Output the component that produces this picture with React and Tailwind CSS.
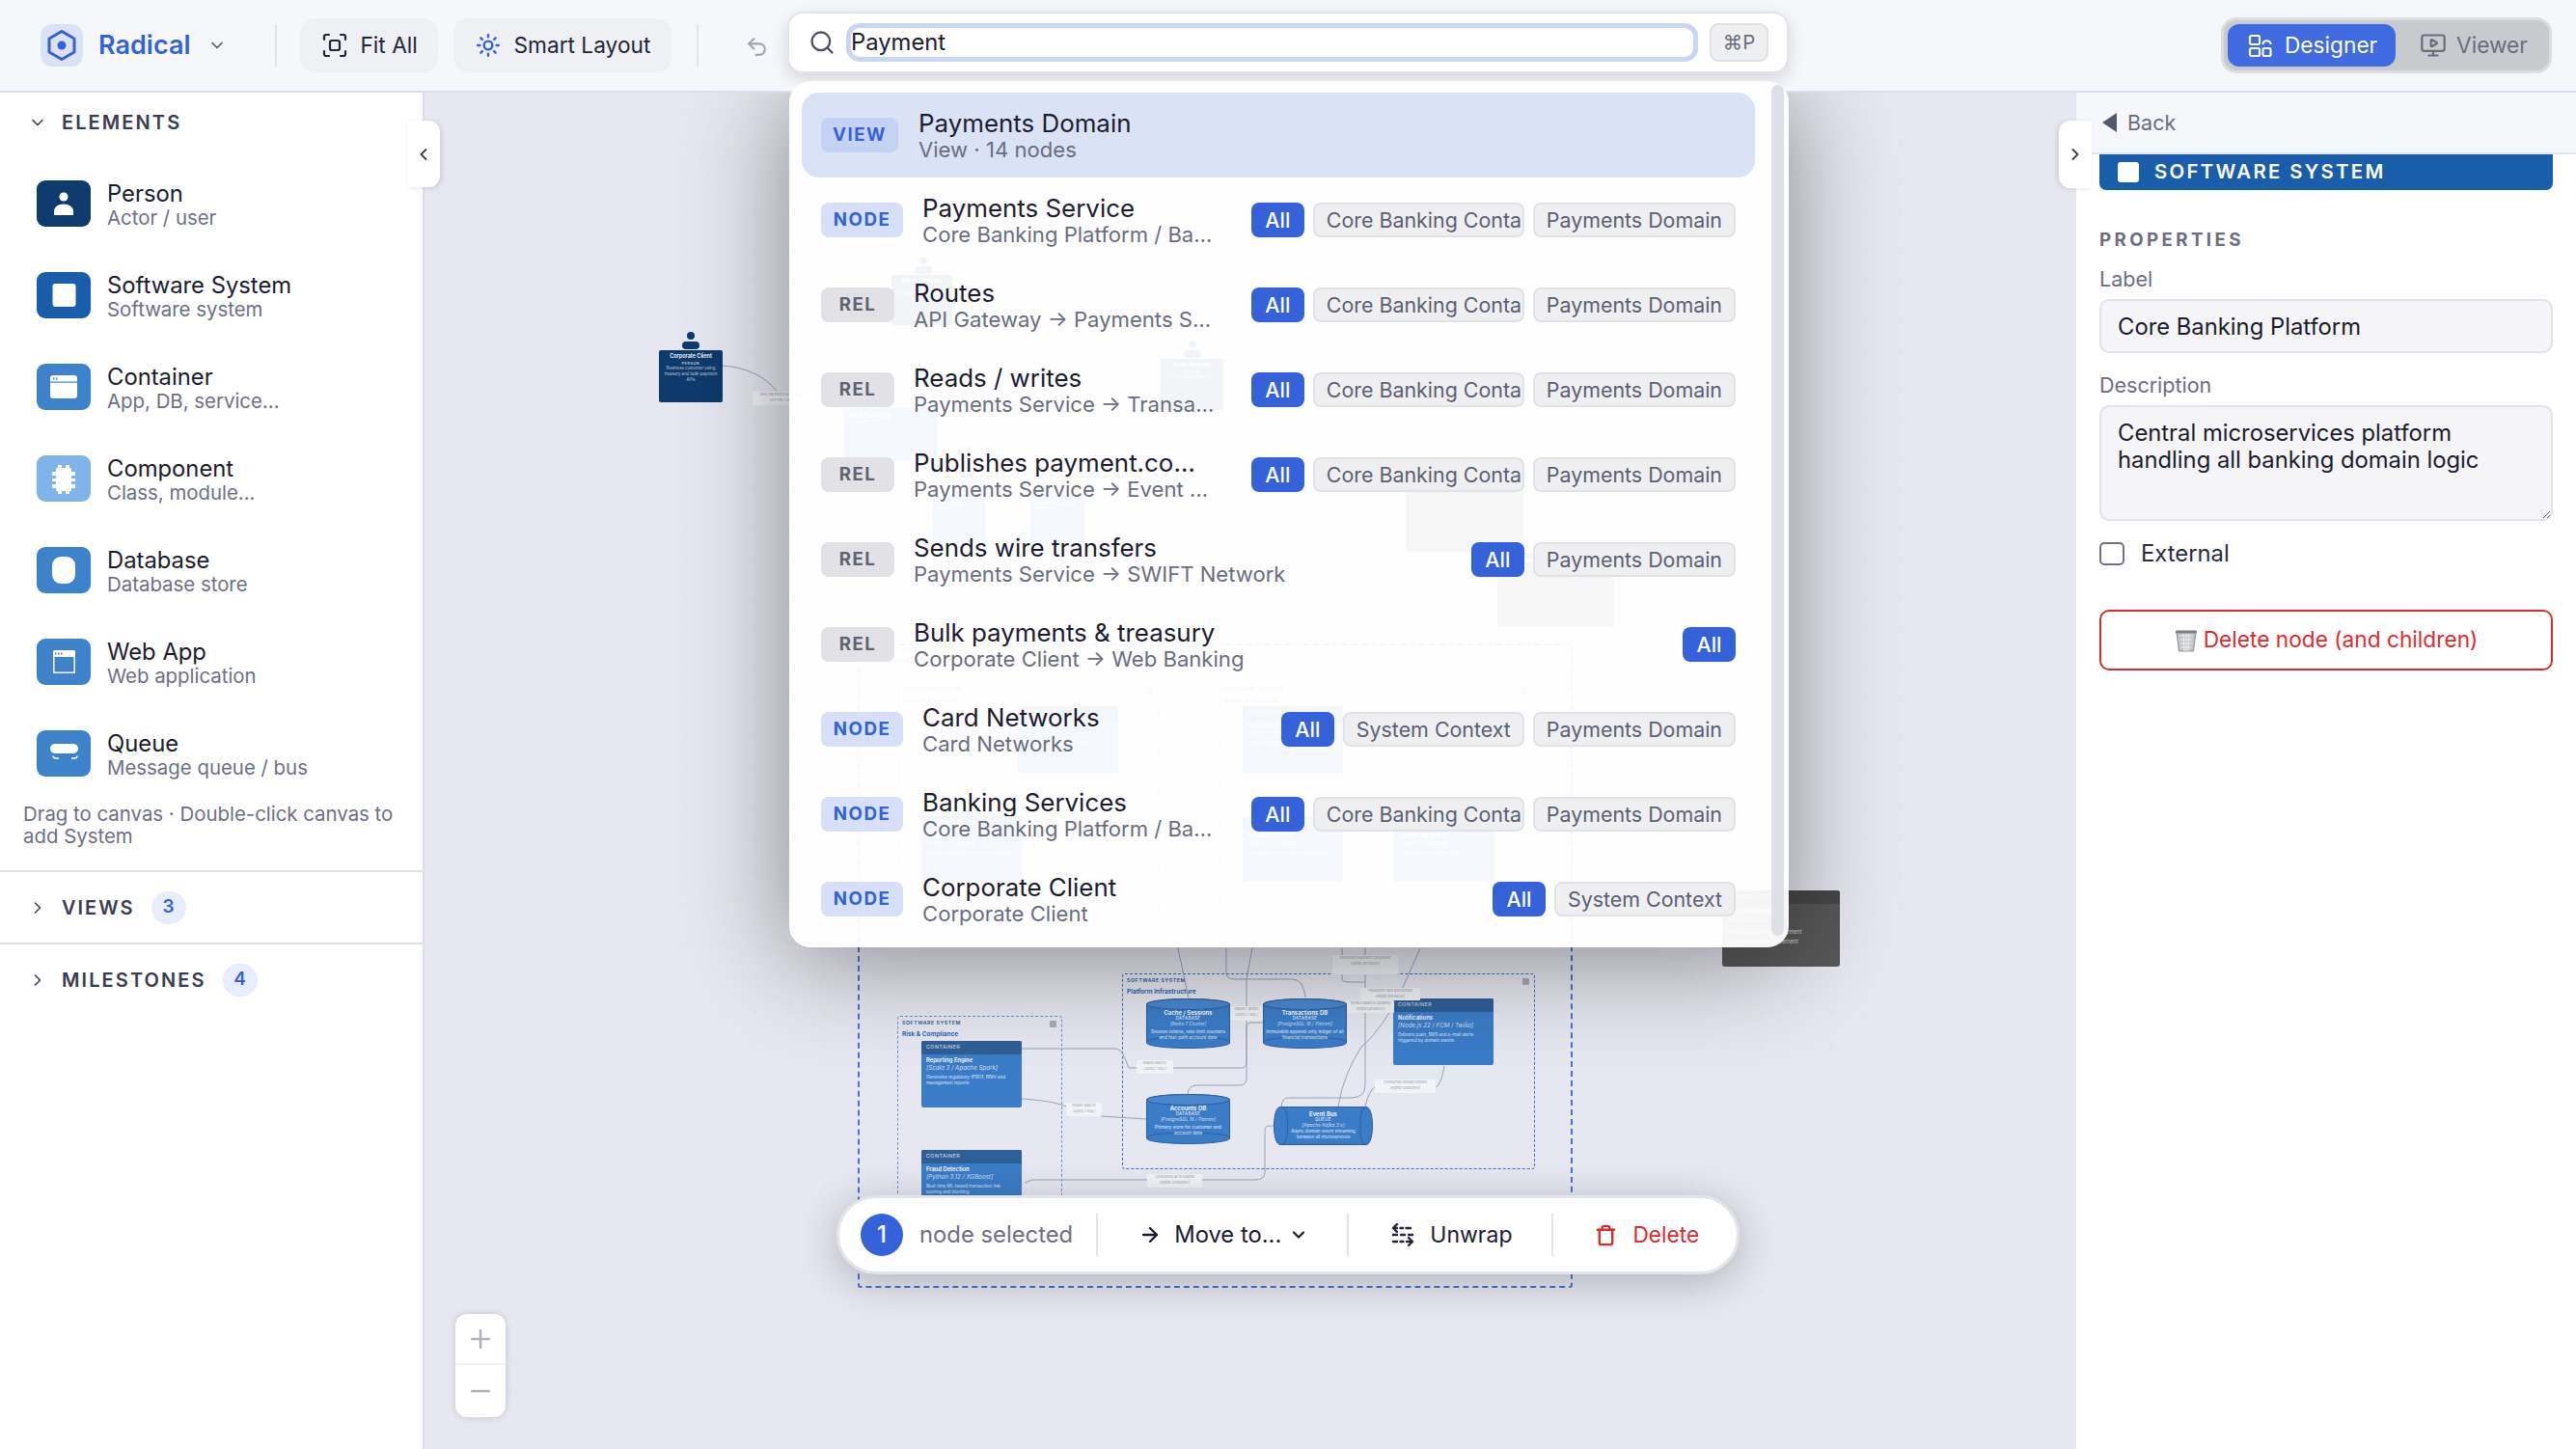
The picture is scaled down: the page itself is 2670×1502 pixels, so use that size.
import React from "react";
import { ChevronDown, ChevronRight, ChevronLeft, Sun, Undo2, Search, MonitorPlay, ArrowRight, Trash, Plus, Minus } from "lucide-react";

const palette = [
  { title: "Person", sub: "Actor / user", bg: "bg-[#0f3a6d]", icon: "person" },
  { title: "Software System", sub: "Software system", bg: "bg-[#1a5dab]", icon: "system" },
  { title: "Container", sub: "App, DB, service...", bg: "bg-[#3f82cc]", icon: "container" },
  { title: "Component", sub: "Class, module...", bg: "bg-[#7fb3ea]", icon: "component" },
  { title: "Database", sub: "Database store", bg: "bg-[#3f82cc]", icon: "database" },
  { title: "Web App", sub: "Web application", bg: "bg-[#3f82cc]", icon: "webapp" },
  { title: "Queue", sub: "Message queue / bus", bg: "bg-[#3f82cc]", icon: "queue" },
];

function PaletteGlyph({ kind, tint }) {
  return (
    <svg width="56" height="48" viewBox="0 0 56 48">
      {kind === "person" && (
        <g fill="#fff">
          <circle cx="28" cy="17" r="4.6" />
          <path d="M18 36v-4c0-4.5 4.5-7.5 10-7.5s10 3 10 7.5v4z" />
        </g>
      )}
      {kind === "system" && <rect x="16.500" y="12" width="24" height="24" rx="3" fill="#fff" />}
      {kind === "container" && (
        <g>
          <rect x="14" y="12" width="28" height="24" rx="3" fill="#fff" />
          <rect x="14" y="18.500" width="28" height="1.200" fill={tint} />
          <rect x="17" y="14.500" width="1.500" height="2" fill={tint} />
          <rect x="20" y="14.500" width="1.500" height="2" fill={tint} />
        </g>
      )}
      {kind === "component" && (
        <g fill="#fff">
          <rect x="20" y="13" width="16" height="24" rx="1.500" />
          <rect x="22" y="10" width="4" height="30" />
          <rect x="30" y="10" width="4" height="30" />
          <rect x="16" y="17" width="24" height="4" />
          <rect x="16" y="24" width="24" height="3" />
          <rect x="16" y="30" width="24" height="4" />
        </g>
      )}
      {kind === "database" && <rect x="16" y="10" width="24" height="28" rx="9" fill="#fff" />}
      {kind === "webapp" && (
        <g>
          <rect x="17" y="12" width="23" height="24" rx="1.500" fill="#fff" />
          <rect x="18.500" y="19" width="20" height="15.500" fill={tint} />
          <rect x="19" y="14.500" width="1.500" height="2" fill={tint} />
          <rect x="22" y="14.500" width="1.500" height="2" fill={tint} />
          <rect x="25" y="14.500" width="1.500" height="2" fill={tint} />
        </g>
      )}
      {kind === "queue" && (
        <g>
          <rect x="14" y="14" width="29" height="10" rx="5" fill="#fff" />
          <path d="M17 26.500c0 2 1 2.500 3 2.500h3M36 29h3c2 0 3-.5 3-2.500" stroke="#fff" strokeWidth="1.500" fill="none" />
        </g>
      )}
    </svg>
  );
}

function CountBadge({ n }) {
  return (
    <span className="flex h-[34px] w-[36px] items-center justify-center rounded-full bg-[#e7edfb] text-[19px] font-semibold text-[#3562d9]">
      {n}
    </span>
  );
}

function Sidebar() {
  const tints = ["", "", "#3f82cc", "", "", "#3f82cc", ""];
  return (
    <aside className="z-10 flex w-[440px] shrink-0 flex-col border-r-2 border-[#dcdfeb] bg-white">
      <div className="flex h-[62px] items-center pl-[29px]">
        <ChevronDown size={20} strokeWidth={1.800} className="text-[#3a3d50]" />
        <span className="ml-[15px] text-[20px] font-semibold tracking-[2.100px] text-[#3a3d50]">ELEMENTS</span>
      </div>
      <div className="flex flex-col gap-[47px] pl-[38px] pt-[29px]">
        {palette.map((p, i) => (
          <div key={p.title} className="flex h-[48px] items-center gap-[17px]">
            <div className={`h-[48px] w-[56px] shrink-0 overflow-hidden rounded-[9px] ${p.bg}`}>
              <PaletteGlyph kind={p.icon} tint={tints[i]} />
            </div>
            <div className="flex flex-col pt-[3px]">
              <span className="text-[23.8px] leading-[26px] text-[#1c1c2e]">{p.title}</span>
              <span className="text-[20.4px] leading-[24px] text-[#6e7082]">{p.sub}</span>
            </div>
          </div>
        ))}
      </div>
      <p className="mx-[24px] mt-[27px] text-[20.4px] leading-[23px] text-[#6e7082]">
        Drag to canvas · Double-click canvas to add System
      </p>
      <div className="mt-[24px] flex h-[75px] items-center border-t-2 border-[#dfe1ea] pl-[29px]">
        <ChevronRight size={20} strokeWidth={1.800} className="text-[#3a3d50]" />
        <span className="ml-[15px] text-[20px] font-semibold tracking-[2px] text-[#3a3d50]">VIEWS</span>
        <span className="ml-[17px]"><CountBadge n={3} /></span>
      </div>
      <div className="flex h-[75px] items-center border-t-2 border-[#dfe1ea] pl-[29px]">
        <ChevronRight size={20} strokeWidth={1.800} className="text-[#3a3d50]" />
        <span className="ml-[15px] text-[20px] font-semibold tracking-[2.100px] text-[#3a3d50]">MILESTONES</span>
        <span className="ml-[17px]"><CountBadge n={4} /></span>
      </div>
    </aside>
  );
}

function FitIcon() {
  return (
    <svg width="26" height="26" viewBox="0 0 26 26" fill="none" stroke="#23263a" strokeWidth="2.200" strokeLinecap="round" strokeLinejoin="round">
      <path d="M2 7V4a2 2 0 0 1 2-2h3M19 2h3a2 2 0 0 1 2 2v3M24 19v3a2 2 0 0 1-2 2h-3M7 24H4a2 2 0 0 1-2-2v-3" />
      <rect x="8" y="8" width="10" height="10" rx="2" />
    </svg>
  );
}

function Topbar() {
  return (
    <header className="z-20 flex h-[96px] shrink-0 items-center border-b-2 border-[#dcdfeb] bg-[#f5f7fb] pl-[42px] pr-[25px]">
      <div className="flex h-[44px] w-[44px] items-center justify-center rounded-[12px] bg-[#dae2f6]">
        <svg width="32" height="34" viewBox="0 0 32 34" fill="none">
          <path d="M16 2.500 29 10v14l-13 7.500L3 24V10z" stroke="#3562d9" strokeWidth="3" strokeLinejoin="round" />
          <circle cx="16" cy="17" r="4.500" fill="#3562d9" />
        </svg>
      </div>
      <span className="ml-[16px] text-[27px] font-semibold text-[#3562d9]">Radical</span>
      <ChevronDown size={20} className="ml-[18px] text-[#555869]" />
      <div className="ml-[50px] h-[44px] w-[2px] bg-[#e2e4ec]" />
      <button className="ml-[24px] flex h-[56px] w-[143px] items-center gap-[13px] rounded-[15px] bg-[#eff0f4] pl-[23px] text-[22.7px] text-[#23263a]">
        <FitIcon />
        Fit All
      </button>
      <button className="ml-[16px] flex h-[56px] w-[226px] items-center gap-[13px] rounded-[15px] bg-[#eff0f4] pl-[23px] text-[22.7px] text-[#23263a]">
        <Sun size={26} strokeWidth={2.200} className="text-[#3562d9]" />
        Smart Layout
      </button>
      <div className="ml-[26px] h-[44px] w-[2px] bg-[#e2e4ec]" />
      <Undo2 size={25} strokeWidth={2} className="ml-[48px] mt-[2px] text-[#a2a4b0]" />
      <div className="ml-auto flex h-[58px] w-[343px] items-center rounded-[16px] border-[3px] border-[#dcdde3] bg-[#c9cace] pl-[4px]">
        <div className="flex h-[44px] w-[174px] items-center gap-[13px] rounded-[12px] bg-[#3f6ae0] pl-[21px] text-[22.700px] text-white">
          <svg width="25" height="25" viewBox="0 0 25 25" fill="none" stroke="#fff" strokeWidth="2.200" strokeLinejoin="round">
            <rect x="2" y="2" width="10" height="9" rx="1.500" />
            <rect x="2" y="15" width="10" height="8" rx="1.500" />
            <rect x="15.500" y="15" width="8" height="8" rx="1.500" />
            <path d="M15.500 11c0-5 8-5 8 0" />
          </svg>
          Designer
        </div>
        <div className="ml-[25px] flex items-center gap-[10px] text-[22.700px] text-[#6a6d7e]">
          <MonitorPlay size={28} strokeWidth={1.900} />
          Viewer
        </div>
      </div>
    </header>
  );
}

function RightPanel() {
  return (
    <aside className="z-10 flex w-[518px] shrink-0 flex-col bg-white">
      <div className="flex h-[64px] shrink-0 items-center gap-[11px] border-b-2 border-[#e4e6ee] bg-[#f5f7fb] pl-[27px] text-[21.500px] text-[#6a6d7e]">
        <svg width="15" height="20" viewBox="0 0 15 20"><path d="M15 0v20L0 10z" fill="#55586a" /></svg>
        Back
      </div>
      <div className="px-[24px]">
        <div className="flex h-[37px] items-center gap-[16px] rounded-b-[7px] bg-[#1a5dab] pl-[19px] text-[20.4px] font-semibold tracking-[2.300px] text-white">
          <span className="h-[21px] w-[22px] rounded-[3px] bg-white" />
          SOFTWARE SYSTEM
        </div>
        <div className="mt-[41px] text-[18.7px] font-bold leading-[22px] tracking-[3.400px] text-[#6b6e80]">PROPERTIES</div>
        <div className="mt-[16px] text-[21.500px] leading-[26px] text-[#6b6e80]">Label</div>
        <input
          readOnly
          value="Core Banking Platform"
          className="mt-[8px] block h-[56px] w-full rounded-[10px] border-2 border-[#e2e3ea] bg-[#f5f5f7] px-[17px] text-[23.8px] text-[#1c1c2e]"
        />
        <div className="mt-[20px] text-[21.500px] leading-[26px] text-[#6b6e80]">Description</div>
        <textarea
          readOnly
          value={"Central microservices platform handling all banking domain logic"}
          className="mt-[8px] block h-[120px] w-full resize-y rounded-[10px] border-2 border-[#e2e3ea] bg-[#f5f5f7] px-[17px] py-[13px] text-[23.8px] leading-[28px] text-[#1c1c2e] outline-none"
        />
        <label className="mt-[22px] flex h-[24px] items-center gap-[17px] text-[23.8px] text-[#2a2c3e]">
          <span className="h-[24px] w-[26px] rounded-[5px] border-2 border-[#6f7280] bg-white" />
          External
        </label>
        <button className="mt-[46px] flex h-[63px] w-full items-center justify-center gap-[6px] rounded-[10px] border-[2.500px] border-[#d92d2d] bg-white text-[22.700px] text-[#d92d2d]">
          <svg width="24" height="24" viewBox="0 0 24 24">
            <path d="M2 3h20l-2.500 20h-15z" fill="#c2c4c6" stroke="#8c8f93" strokeWidth="1" />
            <path d="M5 7h14M5.500 11h13M6 15h12M6.500 19h11M9 4l1 19M15 4l-1 19M12 4v19" stroke="#f2f2f2" strokeWidth="0.900" />
            <rect x="1" y="1.500" width="22" height="3" rx="1" fill="#7d8186" />
          </svg>
          Delete node (and children)
        </button>
      </div>
    </aside>
  );
}

const containers = [
  { x: 955, y: 1079, w: 104, h: 69, title: "Reporting Engine", tech: "[Scala 3 / Apache Spark]", desc: "Generates regulatory (PSD2, BBA) and management reports" },
  { x: 955, y: 1192, w: 104, h: 69, title: "Fraud Detection", tech: "[Python 3.12 / XGBoost]", desc: "Real-time ML-based transaction risk scoring and blocking" },
  { x: 1444, y: 1035, w: 104, h: 69, title: "Notifications", tech: "[Node.js 22 / FCM / Twilio]", desc: "Delivers push, SMS and e-mail alerts triggered by domain events" },
  { x: 1055, y: 732, w: 104, h: 69, title: "Auth Service", tech: "[Go / OAuth2]", desc: "Issues and verifies access tokens" },
  { x: 1288, y: 732, w: 104, h: 69, title: "Payments Service", tech: "[Java 21 / Spring]", desc: "Handles transfers and settlement" },
  { x: 955, y: 846, w: 104, h: 68, title: "Accounts Service", tech: "[Java 21 / Spring]", desc: "Manages customer accounts and balances" },
  { x: 1288, y: 846, w: 104, h: 68, title: "Account Service", tech: "[Java 21 / Spring]", desc: "Customer account lifecycle management" },
  { x: 1445, y: 846, w: 104, h: 68, title: "Card Management", tech: "[Java 21 / Spring]", desc: "Card issuing and authorisation" },
];

const dbs = [
  { x: 1188, y: 1035, title: "Cache / Sessions", tech: "[Redis 7 Cluster]", desc: "Session tokens, rate-limit counters and fast-path account data" },
  { x: 1309, y: 1035, title: "Transactions DB", tech: "[PostgreSQL 16 / Patroni]", desc: "Immutable append-only ledger of all financial transactions" },
  { x: 1188, y: 1134, title: "Accounts DB", tech: "[PostgreSQL 16 / Patroni]", desc: "Primary store for customer and account data" },
];

const boundaries = [
  { x: 1163, y: 1009, w: 428, h: 203, kind: "SOFTWARE SYSTEM", name: "Platform Infrastructure", tone: "border-[#3f6fc4]" },
  { x: 930, y: 1053, w: 171, h: 240, kind: "SOFTWARE SYSTEM", name: "Risk & Compliance", tone: "border-[#6f93cf]" },
  { x: 931, y: 707, w: 270, h: 245, kind: "SOFTWARE SYSTEM", name: "Access & Security", tone: "border-[#6f93cf]" },
  { x: 1264, y: 707, w: 326, h: 230, kind: "SOFTWARE SYSTEM", name: "Banking Services", tone: "border-[#6f93cf]" },
];

const people = [
  { x: 683, y: 363, w: 66, h: 54, title: "Corporate Client", desc: "Business customer using treasury and bulk-payment APIs", hy: 348 },
  { x: 924, y: 285, w: 63, h: 52, title: "Retail Customer", desc: "Individual bank customer", hy: 270 },
  { x: 1203, y: 372, w: 65, h: 53, title: "Bank Operator", desc: "Back-office operator", hy: 357 },
];

const plainBoxes = [
  { x: 875, y: 423, w: 96, h: 54, title: "Web Banking", sub: "WEB APP", bg: "bg-[#3f82cc]" },
  { x: 967, y: 513, w: 55, h: 50, title: "iOS App", sub: "MOBILE", bg: "bg-[#3f82cc]" },
  { x: 1068, y: 513, w: 56, h: 50, title: "Android App", sub: "MOBILE", bg: "bg-[#3f82cc]" },
  { x: 1457, y: 490, w: 122, h: 82, title: "SWIFT Network", sub: "EXTERNAL SYSTEM", bg: "bg-[#5a5a5e]" },
  { x: 1552, y: 573, w: 121, h: 77, title: "API Gateway", sub: "CONTAINER", bg: "bg-[#5a5a5e]" },
];

const labels = [
  { x: 1381, y: 990, w: 68, h: 20, a: "Publishes payment.completed", b: "[Kafka producer]" },
  { x: 1410, y: 1024, w: 62, h: 13, a: "Publishes card.authorised", b: "[Kafka producer]" },
  { x: 1275, y: 1043, w: 34, h: 15, a: "Reads / writes", b: "[JDBC / SQL]" },
  { x: 1396, y: 1037, w: 49, h: 13, a: "Writes balance.updated", b: "[Kafka producer]" },
  { x: 1178, y: 1099, w: 38, h: 14, a: "Reads (batch)", b: "[JDBC / SQL]" },
  { x: 1105, y: 1143, w: 37, h: 14, a: "Reads (batch)", b: "[JDBC / SQL]" },
  { x: 1425, y: 1119, w: 63, h: 14, a: "Consumes domain events", b: "[Kafka consumer]" },
  { x: 1189, y: 1217, w: 57, h: 14, a: "Consumes all tx events", b: "[Kafka consumer]" },
  { x: 780, y: 406, w: 60, h: 14, a: "Bulk payments & treasury", b: "[HTTPS / API]" },
];

const edges = [
  "M749 379C775 381 792 390 805 405",
  "M1059 1087L1155 1087Q1162 1087 1165 1095L1170 1107H1287Q1292 1107 1292 1100V1065Q1292 1060 1297 1060H1309",
  "M1059 1139C1085 1141 1095 1143 1105 1147L1142 1157L1188 1160",
  "M1221 983L1232 1035",
  "M1271 983V1008Q1271 1015 1280 1015H1340Q1351 1015 1353 1034",
  "M1298 983L1292 1015V1118Q1292 1125 1284 1125H1240Q1232 1125 1231 1134",
  "M1415 983V1125Q1415 1138 1400 1138H1335Q1329 1138 1328 1147",
  "M1391 983V1015Q1391 1018 1400 1018H1415",
  "M1472 983L1448 1037Q1425 1075 1411 1085Q1392 1115 1387 1147",
  "M1415 1147Q1419 1130 1425 1127H1488Q1494 1125 1497 1105",
  "M1320 1167H1316Q1311 1167 1311 1172V1215Q1311 1223 1301 1223H1070L1062 1226",
];

function Diagram() {
  return (
    <div className="absolute left-[-440px] top-[-96px] h-[1502px] w-[2670px] leading-none">
      <div className="absolute left-[889px] top-[667px] h-[668px] w-[741px] rounded-[3px] border-2 border-dashed border-[#4a72d2]">
        <div className="pl-[5px] pt-[3px] text-[5.500px] tracking-[0.400px] text-[#1a5dab]">SOFTWARE SYSTEM</div>
        <div className="pl-[5px] pt-[3px] text-[7px] font-semibold text-[#1a5dab]">Core Banking Platform</div>
      </div>
      {boundaries.map((b) => (
        <div
          key={b.name}
          className={`absolute rounded-[3px] border border-dashed ${b.tone}`}
          style={{ left: b.x, top: b.y, width: b.w, height: b.h }}
        >
          <div className="pl-[4px] pt-[4px] text-[5.300px] font-semibold tracking-[0.500px] text-[#1f5a9f]">{b.kind}</div>
          <div className="pl-[4px] pt-[6px] text-[6.500px] font-semibold text-[#1a5dab]">{b.name}</div>
          <span className="absolute right-[5px] top-[4px] h-[7px] w-[7px] rounded-[1px] bg-[#a9acb8]" />
        </div>
      ))}
      <svg className="absolute left-0 top-0" width="2670" height="1502" fill="none" stroke="#98a2b8" strokeWidth="1">
        {edges.map((d) => <path key={d} d={d} />)}
      </svg>
      {containers.map((c) => (
        <div
          key={c.title}
          className="absolute overflow-hidden rounded-[2px] bg-[#3b7cc8] text-white"
          style={{ left: c.x, top: c.y, width: c.w, height: c.h }}
        >
          <div className="flex h-[14px] items-center bg-[#2f5f97] pl-[5px] text-[5.300px] tracking-[0.500px] text-white/80">CONTAINER</div>
          <div className="pl-[5px] pt-[3px] text-[5.800px] font-semibold">{c.title}</div>
          <div className="pl-[5px] pt-[2px] text-[6.200px] italic text-white/75">{c.tech}</div>
          <div className="px-[5px] pt-[4px] text-[4.500px] leading-[6px] text-white/80">{c.desc}</div>
        </div>
      ))}
      {dbs.map((d) => (
        <div key={d.title} className="absolute h-[52px] w-[87px] text-center text-white" style={{ left: d.x, top: d.y }}>
          <svg className="absolute left-0 top-0" width="87" height="52" viewBox="0 0 87 52">
            <path d="M.5 6C.5 3 20 .5 43.500 .5S86.500 3 86.500 6V46C86.500 49 67 51.500 43.500 51.500S.5 49 .5 46z" fill="#3b7cc8" stroke="#2f5f97" />
            <ellipse cx="43.500" cy="6" rx="43" ry="5.500" fill="#4a87cf" stroke="#2f5f97" />
            <path d="M.5 46C.5 41 20 40.500 43.500 40.500S86.500 41 86.500 46" fill="none" stroke="#2f5f97" />
          </svg>
          <div className="relative pt-[12px] text-[6px] font-semibold">{d.title}</div>
          <div className="relative pt-[1px] text-[4.400px] tracking-[0.400px]">DATABASE</div>
          <div className="relative pt-[1px] text-[4.800px] italic text-white/75">{d.tech}</div>
          <div className="relative px-[2px] pt-[2px] text-[4.700px] leading-[6px] text-white/85">{d.desc}</div>
        </div>
      ))}
      <div className="absolute left-[1320px] top-[1147px] h-[40px] w-[103px] text-center text-white">
        <svg className="absolute left-0 top-0" width="103" height="40" viewBox="0 0 103 40">
          <path d="M7 .5H96C100 .5 102.500 9 102.500 20S100 39.500 96 39.500H7C3 39.500 .5 31 .5 20S3 .5 7 .5z" fill="#3b7cc8" stroke="#2f5f97" />
          <path d="M8 .5C13 .5 14.500 9 14.500 20S13 39.500 8 39.500" fill="none" stroke="#2f5f97" />
          <path d="M96 .5C91 .5 90 9 90 20S91 39.500 96 39.500" fill="none" stroke="#2f5f97" />
        </svg>
        <div className="relative pt-[5px] text-[6px] font-semibold">Event Bus</div>
        <div className="relative pt-[1px] text-[4.400px] tracking-[0.400px]">QUEUE</div>
        <div className="relative pt-[1px] text-[4.800px] italic text-white/75">[Apache Kafka 3.x]</div>
        <div className="relative px-[15px] pt-[1px] text-[4.500px] leading-[6px] text-white/85">Async domain-event streaming between all microservices</div>
      </div>
      {people.map((p) => (
        <div key={p.title} className="absolute" style={{ left: p.x, top: p.hy - 4 }}>
          <span className="absolute left-[29px] top-0 h-[8px] w-[8px] rounded-full bg-[#0f3a6d]" />
          <span className="absolute left-[24px] top-[10px] h-[8px] w-[18px] rounded-full bg-[#0f3a6d]" />
          <div
            className="absolute top-[19px] overflow-hidden rounded-[2px] bg-[#0f3a6d] px-[3px] pt-[4px] text-center text-white"
            style={{ width: p.w, height: p.h }}
          >
            <div className="whitespace-nowrap text-[5.500px] font-semibold">{p.title}</div>
            <div className="pt-[2px] text-[3.800px] tracking-[0.500px]">PERSON</div>
            <div className="pt-[1px] text-[4.300px] leading-[6px] text-white/75">{p.desc}</div>
          </div>
        </div>
      ))}
      {plainBoxes.map((b) => (
        <div
          key={b.title}
          className={`absolute overflow-hidden rounded-[2px] pl-[4px] pt-[4px] text-white ${b.bg}`}
          style={{ left: b.x, top: b.y, width: b.w, height: b.h }}
        >
          <div className="text-[7px] font-semibold">{b.title}</div>
          <div className="pt-[2px] text-[4.500px]">{b.sub}</div>
        </div>
      ))}
      <div className="absolute left-[1785px] top-[923px] h-[79px] w-[122px] overflow-hidden rounded-[3px] bg-[#585858] text-white">
        <div className="flex h-[14px] items-center bg-[#474747] pl-[5px] text-[5.300px] tracking-[0.500px] text-white/70">EXTERNAL SYSTEM</div>
        <div className="pl-[5px] pt-[4px] text-[7.500px] font-semibold text-white/80">Card Networks</div>
        <div className="pl-[5px] pt-[3px] text-[5px] italic text-white/60">Visa / Mastercard</div>
        <div className="px-[5px] pt-[4px] text-[5.500px] leading-[10px] text-white/75">Visa and Mastercard payment authorisation and settlement</div>
      </div>
      {labels.map((l) => (
        <div
          key={l.a + l.x}
          className="absolute overflow-hidden rounded-[1px] bg-[#f2f3f7] text-center text-[3.700px] leading-[6px] whitespace-nowrap text-[#9a9dab]"
          style={{ left: l.x, top: l.y, width: l.w, height: l.h }}
        >
          <div>{l.a}</div>
          <div className="italic">{l.b}</div>
        </div>
      ))}
      <div className="absolute left-[818px] top-[84px] h-[898px] w-[1036px] rounded-[22px] shadow-[0_12px_110px_rgba(0,0,0,0.42)]" />
    </div>
  );
}

const NODE = "NODE";
const REL = "REL";
const results = [
  { t: "Payments Service", s: "Core Banking Platform / Banking Services", k: NODE, p: ["Core Banking Container", "Payments Domain"] },
  { t: "Routes", s: "API Gateway → Payments Service", k: REL, p: ["Core Banking Container", "Payments Domain"] },
  { t: "Reads / writes", s: "Payments Service → Transactions DB", k: REL, p: ["Core Banking Container", "Payments Domain"] },
  { t: "Publishes payment.completed", s: "Payments Service → Event Bus", k: REL, p: ["Core Banking Container", "Payments Domain"] },
  { t: "Sends wire transfers", s: "Payments Service → SWIFT Network", k: REL, p: ["Payments Domain"] },
  { t: "Bulk payments & treasury", s: "Corporate Client → Web Banking", k: REL, p: [] },
  { t: "Card Networks", s: "Card Networks", k: NODE, p: ["System Context", "Payments Domain"] },
  { t: "Banking Services", s: "Core Banking Platform / Banking Services", k: NODE, p: ["Core Banking Container", "Payments Domain"] },
  { t: "Corporate Client", s: "Corporate Client", k: NODE, p: ["System Context"] },
];

function Pill({ label }) {
  return (
    <span className="flex h-[36px] max-w-[219px] shrink-0 items-center overflow-hidden whitespace-nowrap rounded-[8px] border-2 border-[#dfe2e9] bg-[#efeff1] px-[12px] text-[21.4px] text-[#5b5f73]">
      {label}
    </span>
  );
}

function ResultRow({ r }) {
  const node = r.k === NODE;
  return (
    <div className="flex h-[88px] items-center px-[20px]">
      <span
        className={`flex h-[36px] shrink-0 items-center justify-center rounded-[8px] text-[18.7px] font-bold tracking-[1.500px] ${
          node ? "w-[85px] bg-[#d7e0f8] text-[#3562d9]" : "w-[76px] bg-[#e2e2e6] text-[#5f6270]"
        }`}
      >
        {r.k}
      </span>
      <div className="ml-[20px] flex min-w-0 flex-1 flex-col">
        <span className="truncate text-[25.9px] leading-[29px] text-[#1c1c2e]">{r.t}</span>
        <span className="truncate text-[22.1px] leading-[26px] text-[#6a6d7e]">{r.s}</span>
      </div>
      <div className="ml-[36px] flex shrink-0 items-center gap-[9px]">
        <span className="flex h-[36px] w-[55px] items-center justify-center rounded-[8px] bg-[#3562d9] text-[21.4px] font-medium text-white">All</span>
        {r.p.map((x) => <Pill key={x} label={x} />)}
      </div>
    </div>
  );
}

function CommandPalette() {
  return (
    <>
      <div className="absolute left-[816px] top-[12px] z-30 flex h-[64px] w-[1038px] items-center rounded-[16px] border-2 border-[#e3e4ea] bg-white pl-[20px] shadow-[0_6px_18px_rgba(0,0,0,0.14)]">
        <Search size={28} strokeWidth={2} className="text-[#4e5162]" />
        <div className="ml-[11px] flex h-[40px] w-[883px] items-center rounded-[14px] border-[5px] border-[#cad6f3] bg-white text-[23.8px] text-[#1c1c2e]">
          Payment
        </div>
        <div className="ml-[12px] flex h-[40px] w-[61px] items-center justify-center rounded-[9px] border-2 border-[#dfe0e4] bg-[#eeeff1] text-[20.4px] text-[#6a6d7e]">
          ⌘P
        </div>
      </div>
      <div className="absolute left-[818px] top-[84px] z-30 h-[898px] w-[1036px] rounded-[22px] bg-white/95 pl-[13px] pr-[35px] pt-[12px]">
        <div className="flex h-[88px] items-center rounded-[18px] bg-[#dae2f6] px-[20px]">
          <span className="flex h-[36px] w-[80px] items-center justify-center rounded-[8px] bg-[#c5d2f3] text-[18.7px] font-bold tracking-[1.500px] text-[#3562d9]">VIEW</span>
          <div className="ml-[21px] flex flex-col">
            <span className="text-[25.9px] leading-[29px] text-[#1c1c2e]">Payments Domain</span>
            <span className="text-[22.1px] leading-[26px] text-[#6a6d7e]">View · 14 nodes</span>
          </div>
        </div>
        {results.map((r) => <ResultRow key={r.t} r={r} />)}
        <div className="absolute right-[5px] top-[4px] h-[882px] w-[13px] rounded-full bg-[#dde0e7]" />
      </div>
    </>
  );
}

function UnwrapIcon() {
  return (
    <svg width="24" height="24" viewBox="0 0 24 24" fill="none" stroke="#23263a" strokeWidth="2.400" strokeLinecap="round" strokeLinejoin="round">
      <path d="M6 1 2 5l4 4" />
      <path d="M3 5h3M9.500 5h2.500M15.500 5h4.500" />
      <path d="M2 12h4M10 12h4M18 12h4" />
      <path d="M18 15l4 4-4 4" />
      <path d="M2 19h4M9.500 19h3M16 19h5" />
    </svg>
  );
}

function SelectionBar() {
  return (
    <div className="absolute left-[867px] top-[1239px] z-20 flex h-[82px] w-[936px] items-center rounded-full border-[3px] border-[#e3e5ec] bg-white text-[23.8px] shadow-[0_8px_44px_rgba(0,0,0,0.24)]">
      <span className="ml-[22px] flex h-[44px] w-[44px] items-center justify-center rounded-full bg-[#3562d9] text-[23.8px] font-medium text-white">1</span>
      <span className="ml-[17px] text-[#6e7082]">node selected</span>
      <span className="ml-[24px] h-[44px] w-[2px] bg-[#e2e4ec]" />
      <ArrowRight size={24} strokeWidth={2.300} className="ml-[42px] text-[#1c1c2e]" />
      <span className="ml-[13px] text-[#1c1c2e]">Move to...</span>
      <ChevronDown size={20} strokeWidth={2.600} className="ml-[8px] text-[#1c1c2e]" />
      <span className="ml-[40px] h-[44px] w-[2px] bg-[#e2e4ec]" />
      <span className="ml-[44px]"><UnwrapIcon /></span>
      <span className="ml-[16px] text-[23px] text-[#1c1c2e]">Unwrap</span>
      <span className="ml-[40px] h-[44px] w-[2px] bg-[#e2e4ec]" />
      <Trash size={23} strokeWidth={2.500} className="ml-[43px] text-[#d92d2d]" />
      <span className="ml-[17px] text-[22.700px] text-[#d92d2d]">Delete</span>
    </div>
  );
}

export default function App() {
  return (
    <div className="relative flex h-[1502px] w-[2670px] flex-col overflow-hidden bg-[#e6e7f0] [font-family:Inter,'Noto_Sans',sans-serif]">
      <Topbar />
      <div className="flex min-h-0 flex-1">
        <Sidebar />
        <main className="relative flex-1 overflow-hidden bg-[#e6e7f0] bg-[radial-gradient(#dfe0ea_1.5px,transparent_1.5px)] bg-[size:36px_36px]">
          <Diagram />
          <div className="absolute left-[32px] top-[1266px] flex h-[107px] w-[52px] flex-col overflow-hidden rounded-[12px] bg-white text-[#b0b0bb] shadow-[0_0_6px_rgba(60,65,90,0.22)]">
            <div className="flex h-[53px] items-center justify-center border-b-2 border-[#f1f2f7]"><Plus size={30} strokeWidth={2} /></div>
            <div className="flex flex-1 items-center justify-center"><Minus size={30} strokeWidth={2} /></div>
          </div>
        </main>
        <RightPanel />
      </div>
      <div className="absolute left-[422px] top-[125px] z-20 flex h-[69px] w-[34px] items-center justify-center rounded-r-[12px] bg-white shadow-[2px_1px_5px_rgba(60,65,90,0.14)]">
        <ChevronLeft size={20} strokeWidth={2.200} className="text-[#3a3d50]" />
      </div>
      <div className="absolute left-[2134px] top-[125px] z-20 flex h-[70px] w-[34px] items-center justify-center rounded-l-[12px] bg-white shadow-[-2px_1px_5px_rgba(60,65,90,0.14)]">
        <ChevronRight size={20} strokeWidth={2.200} className="text-[#3a3d50]" />
      </div>
      <CommandPalette />
      <SelectionBar />
    </div>
  );
}
